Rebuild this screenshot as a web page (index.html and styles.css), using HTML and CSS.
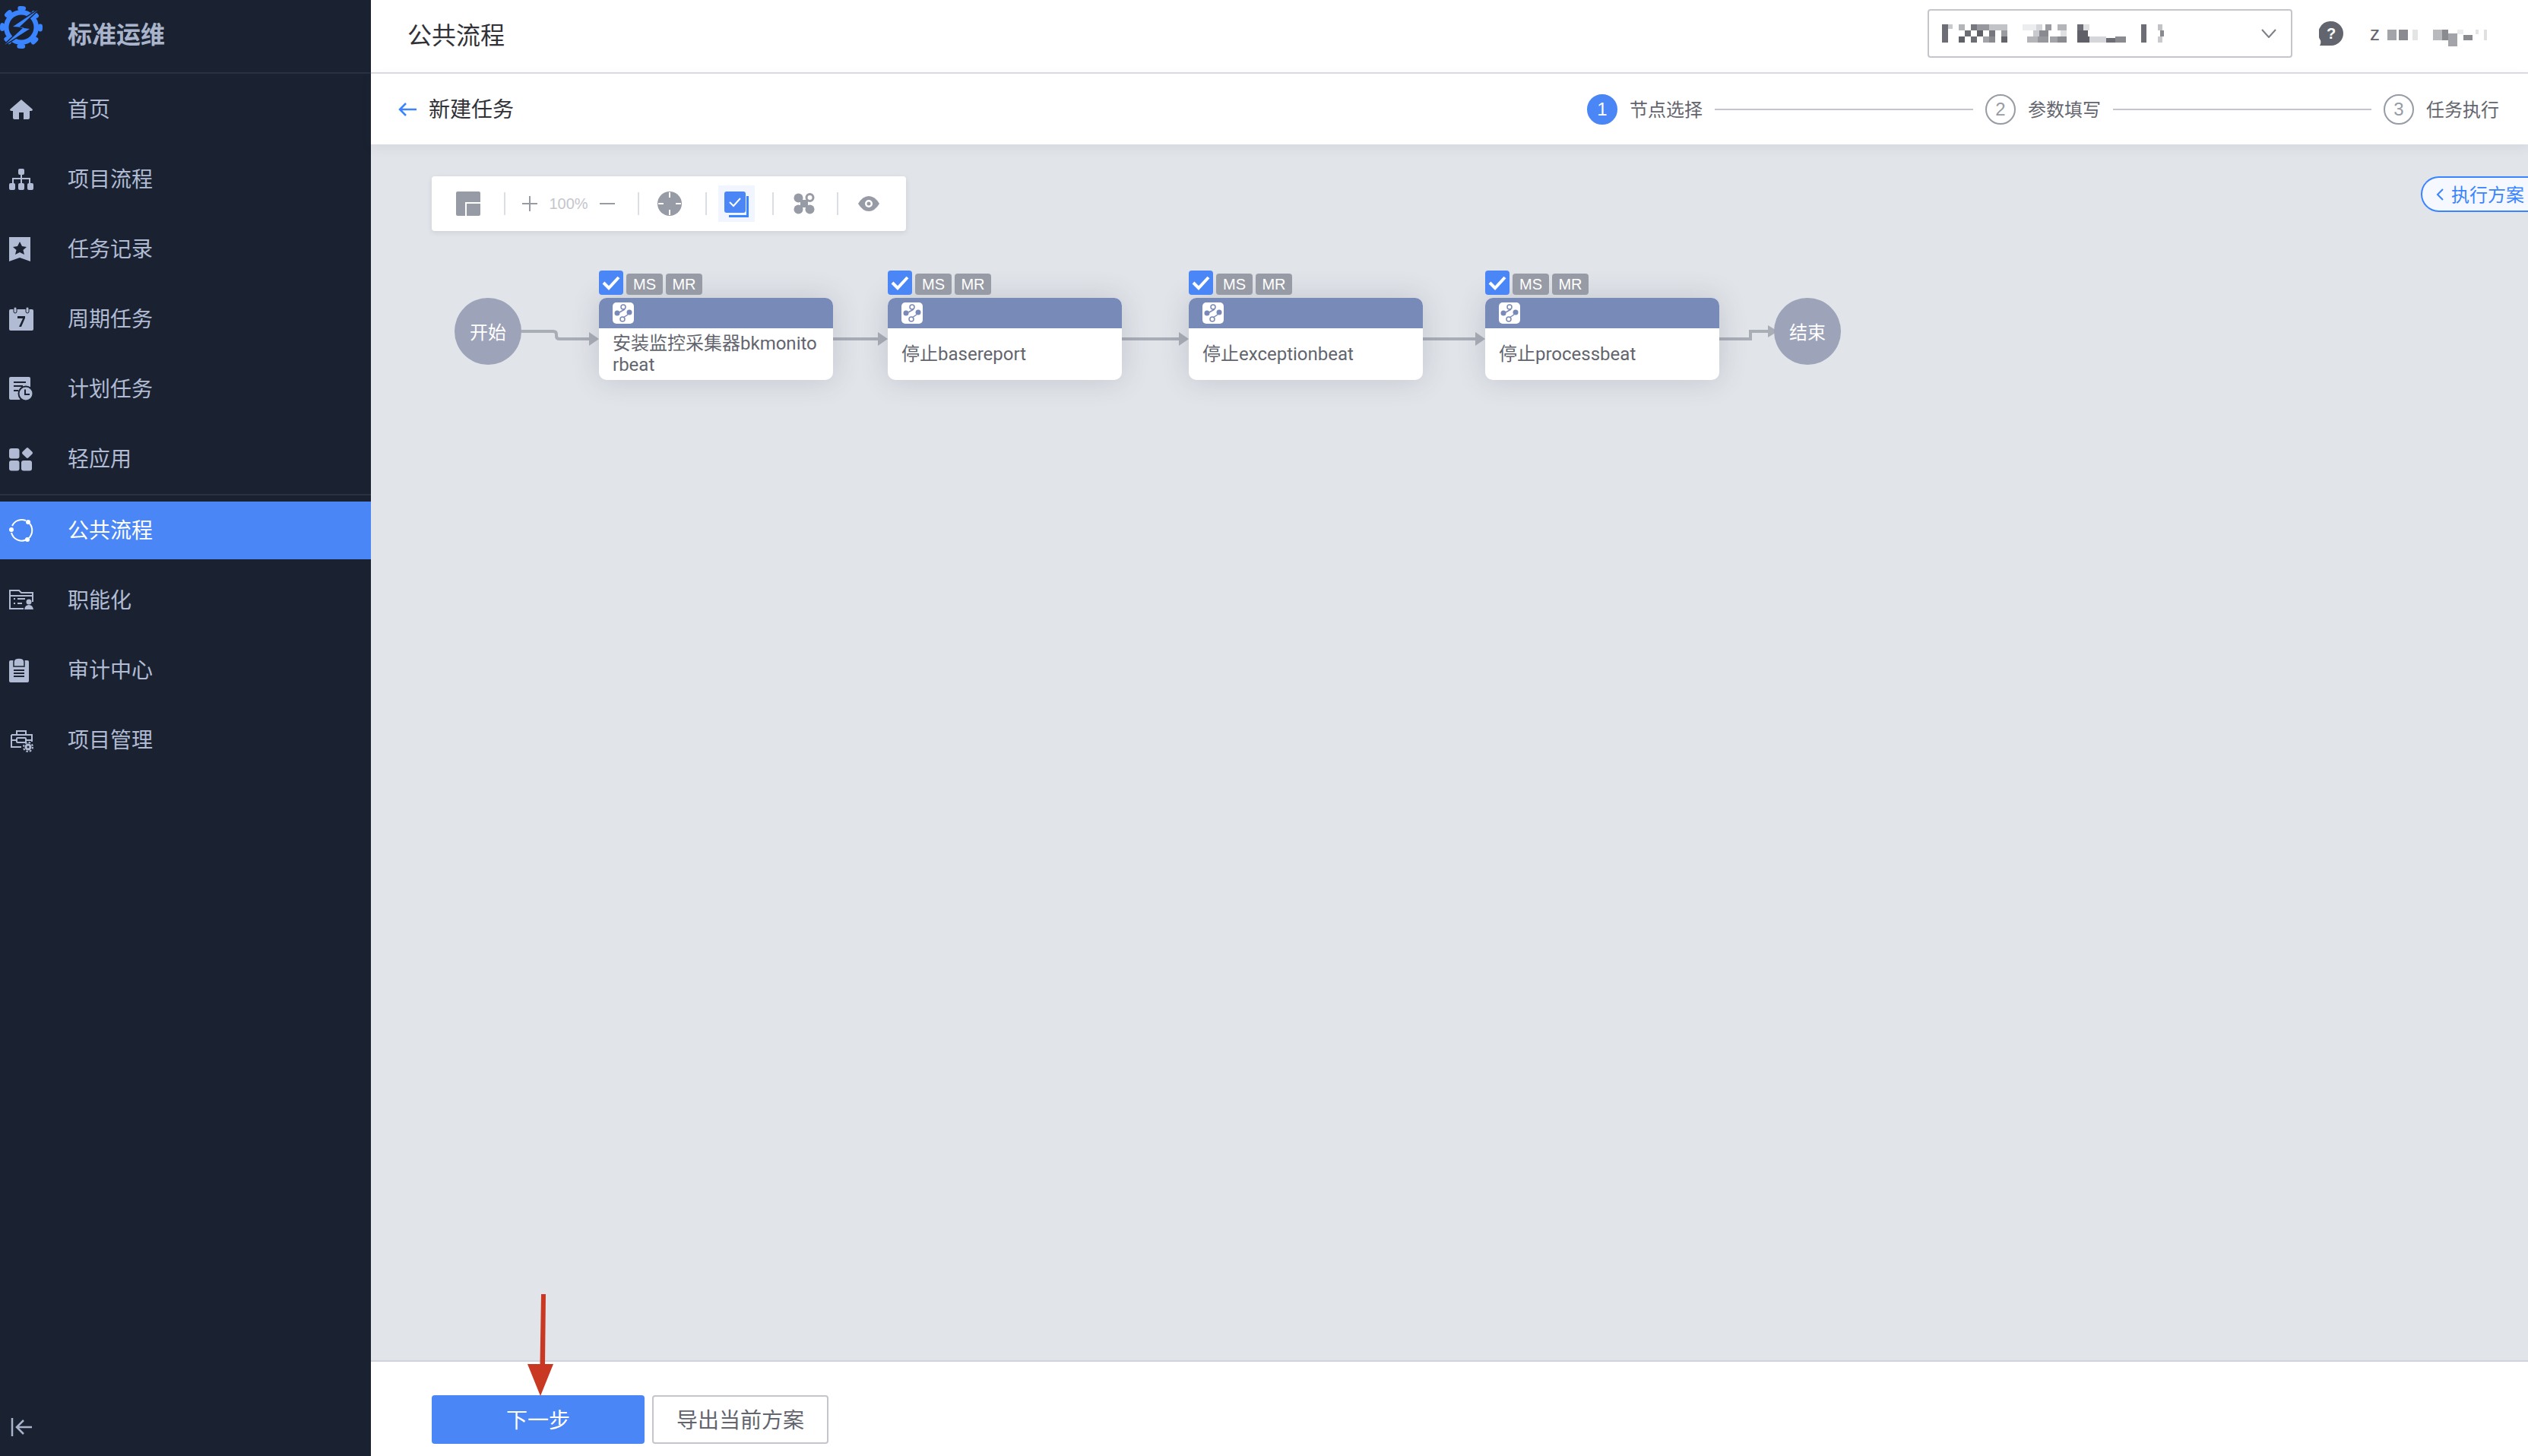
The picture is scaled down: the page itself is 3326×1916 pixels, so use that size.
FILE: index.html
```html
<!DOCTYPE html>
<html lang="zh-CN">
<head>
<meta charset="utf-8">
<title>公共流程</title>
<link rel="stylesheet" href="styles.css">
</head>
<body>
<div class="app">
  <aside class="sidebar">
    <div class="brand">
      <svg class="logo" viewBox="0 0 56 72" width="56" height="72">
        <circle cx="28" cy="36" r="23" fill="#3a84ff"/>
        <circle cx="28" cy="36" r="25" fill="none" stroke="#3a84ff" stroke-width="6" stroke-linecap="round" stroke-dasharray="5 14.630" stroke-dashoffset="2.500"/>
        <circle cx="28" cy="36" r="16.500" fill="#1a2231"/>
        <path d="M50 13 L17 35 L31 36 L6 59 L39 38 L25 36 Z" fill="#3a84ff" stroke="#1a2231" stroke-width="3" stroke-linejoin="round"/>
        <path d="M50 13 L17 35 L31 36 L6 59 L39 38 L25 36 Z" fill="#3a84ff"/>
      </svg>
      <span class="brand-name">标准运维</span>
    </div>
    <nav class="nav">
      <a class="nav-item">
        <svg class="nav-icon" viewBox="0 0 32 32"><path d="M16 3 L31 16 Q31 18 29 18 L27 18 V27 Q27 29 25 29 H7 Q5 29 5 27 V18 L3 18 Q1 18 1 16 Z M13 20 V29 H19 V20 Z" fill="#b1bcd4" fill-rule="evenodd"/></svg>
        <span>首页</span>
      </a>
      <a class="nav-item">
        <svg class="nav-icon" viewBox="0 0 32 32" fill="#b1bcd4"><rect x="12" y="2" width="8" height="8" rx="2"/><rect x="0" y="21" width="8" height="9" rx="2"/><rect x="12" y="21" width="8" height="9" rx="2"/><rect x="24" y="21" width="8" height="9" rx="2"/><path d="M15 10h2v4h11v7h-2v-5H17v5h-2v-5H6v5H4v-7h11z"/></svg>
        <span>项目流程</span>
      </a>
      <a class="nav-item">
        <svg class="nav-icon" viewBox="0 0 32 32"><path d="M0 0 H28 V32 L14 27 L0 32 Z" fill="#b1bcd4"/><path d="M14 6 L17 12 L23 13 L18.500 17 L20 23 L14 20 L8 23 L9.500 17 L5 13 L11 12 Z" fill="#1a2231"/></svg>
        <span>任务记录</span>
      </a>
      <a class="nav-item">
        <svg class="nav-icon" viewBox="0 0 32 32"><path d="M2 3 H30 Q32 3 32 5 V29 Q32 31 30 31 H2 Q0 31 0 29 V5 Q0 3 2 3 Z" fill="#b1bcd4"/><rect x="6" y="0" width="4" height="8" rx="2" fill="#b1bcd4" stroke="#1a2231"/><rect x="22" y="0" width="4" height="8" rx="2" fill="#b1bcd4" stroke="#1a2231"/><path d="M11 12 H21 V14.500 L16 26 H13 L18 15 H11 Z" fill="#1a2231"/></svg>
        <span>周期任务</span>
      </a>
      <a class="nav-item">
        <svg class="nav-icon" viewBox="0 0 32 32"><path d="M2 0 H26 Q28 0 28 2 V14 L14 30 H2 Q0 30 0 28 V2 Q0 0 2 0 Z" fill="#b1bcd4"/><path d="M6 7 H22 M6 12 H18 M6 18 H12" stroke="#1a2231" stroke-width="2"/><circle cx="22" cy="22" r="9.500" fill="#b1bcd4" stroke="#1a2231" stroke-width="2"/><path d="M21 16.500 V23 H27" stroke="#1a2231" stroke-width="2" fill="none"/></svg>
        <span>计划任务</span>
      </a>
      <a class="nav-item">
        <svg class="nav-icon" viewBox="0 0 32 32" fill="#b1bcd4"><rect x="0" y="2" width="13.500" height="13.500" rx="3"/><rect x="0" y="18" width="13.500" height="13.500" rx="3"/><rect x="16" y="18" width="14" height="13.500" rx="3"/><rect x="18.500" y="2.500" width="11" height="11" rx="2" transform="rotate(45 24 8)"/></svg>
        <span>轻应用</span>
      </a>
      <div class="nav-divider"></div>
      <a class="nav-item nav-item-active">
        <svg class="nav-icon" viewBox="0 0 32 32" fill="none" stroke="#fff" stroke-width="2"><path d="M4 10 A14 14 0 0 1 22 3"/><path d="M27 7 A14 14 0 0 1 26 26"/><path d="M22 28.500 A14 14 0 0 1 3 19"/><circle cx="25" cy="5" r="3" fill="#fff" stroke="none"/><circle cx="24" cy="28" r="3" fill="#fff" stroke="none"/><circle cx="3" cy="15" r="3" fill="#fff" stroke="none"/></svg>
        <span>公共流程</span>
      </a>
      <a class="nav-item">
        <svg class="nav-icon" viewBox="0 0 32 32" fill="none" stroke="#b1bcd4" stroke-width="2"><path d="M19 27 H1 V3 H13 L16 6 H31 V18"/><path d="M1 10 H31"/><path d="M6 14 H8 M6 20 H8 M11 14 H21 M11 20 H17"/><circle cx="26" cy="18" r="3.500" fill="#b1bcd4" stroke="none"/><path d="M20 28 Q21 22 26 22 Q31 22 32 28 Z" fill="#b1bcd4" stroke="none"/></svg>
        <span>职能化</span>
      </a>
      <a class="nav-item">
        <svg class="nav-icon nav-icon-narrow" viewBox="0 0 26 32"><path d="M2 3 H24 Q26 3 26 5 V30 Q26 32 24 32 H2 Q0 32 0 30 V5 Q0 3 2 3 Z" fill="#b1bcd4"/><path d="M6 11 V5 Q6 0 13 0 Q20 0 20 5 V11 Z" fill="#b1bcd4" stroke="#1a2231" stroke-width="1.500"/><path d="M6 16 H20 M6 20 H20 M6 24 H20" stroke="#1a2231" stroke-width="2"/></svg>
        <span>审计中心</span>
      </a>
      <a class="nav-item">
        <svg class="nav-icon" viewBox="0 0 32 32" fill="none" stroke="#b1bcd4" stroke-width="2"><path d="M3 9 H30 V18 M3 9 V25 H16 M10 9 V4 H22 V9 M3 16 H10 M22 16 H30"/><rect x="10" y="13" width="12" height="6" rx="1"/><circle cx="25" cy="25" r="3" stroke-width="3"/><circle cx="25" cy="25" r="6" stroke-width="2" stroke-dasharray="2.500 2.200"/></svg>
        <span>项目管理</span>
      </a>
    </nav>
    <div class="collapse">
      <svg viewBox="0 0 28 28" width="28" height="28" fill="none" stroke="#a9b4cb" stroke-width="2.500"><path d="M2 2 V26"/><path d="M28 14 H9 M17 5 L8 14 L17 23"/></svg>
    </div>
  </aside>

  <main class="main">
    <header class="topbar">
      <h1 class="page-title">公共流程</h1>
      <div class="topbar-right">
        <div class="select">
          <svg class="mosaic" viewBox="0 0 300 26" width="300" height="26" shape-rendering="crispEdges">
            <rect x="0" y="1" width="8" height="24" fill="#6d6e75"/><rect x="8" y="1" width="6" height="6" fill="#c9cacd"/>
            <rect x="22" y="1" width="8" height="8" fill="#b4b5b9"/><rect x="38" y="1" width="8" height="8" fill="#77787f"/><rect x="46" y="1" width="16" height="8" fill="#97989e"/><rect x="62" y="1" width="24" height="8" fill="#c2c3c7"/>
            <rect x="30" y="9" width="8" height="8" fill="#6d6e75"/><rect x="46" y="9" width="8" height="8" fill="#5f6068"/><rect x="62" y="9" width="8" height="8" fill="#77787f"/><rect x="78" y="9" width="8" height="8" fill="#9b9ca2"/>
            <rect x="22" y="17" width="8" height="8" fill="#5f6068"/><rect x="38" y="17" width="8" height="8" fill="#6d6e75"/><rect x="54" y="17" width="8" height="8" fill="#a3a4a9"/><rect x="62" y="17" width="8" height="8" fill="#8a8b91"/><rect x="78" y="17" width="8" height="8" fill="#63646b"/>
            <rect x="106" y="1" width="18" height="8" fill="#ecedef"/><rect x="124" y="1" width="8" height="8" fill="#d5d6d9"/><rect x="136" y="1" width="8" height="8" fill="#9b9ca2"/><rect x="152" y="1" width="12" height="8" fill="#b4b5b9"/><rect x="178" y="1" width="8" height="8" fill="#6d6e75"/><rect x="186" y="1" width="8" height="8" fill="#dfe0e2"/>
            <rect x="120" y="9" width="16" height="8" fill="#c9cacd"/><rect x="128" y="9" width="12" height="8" fill="#8a8b91"/><rect x="156" y="9" width="8" height="8" fill="#dfe0e2"/><rect x="178" y="9" width="14" height="8" fill="#5f6068"/>
            <rect x="112" y="17" width="14" height="8" fill="#b4b5b9"/><rect x="126" y="17" width="14" height="8" fill="#97989e"/><rect x="142" y="17" width="10" height="8" fill="#a3a4a9"/><rect x="152" y="17" width="12" height="8" fill="#8a8b91"/><rect x="178" y="17" width="16" height="8" fill="#5f6068"/><rect x="194" y="17" width="22" height="8" fill="#d5d6d9"/><rect x="216" y="19" width="12" height="6" fill="#6d6e75"/><rect x="228" y="17" width="14" height="8" fill="#8a8b91"/>
            <rect x="262" y="1" width="7" height="24" fill="#6d6e75"/><rect x="284" y="1" width="6" height="8" fill="#c2c3c7"/><rect x="287" y="9" width="5" height="8" fill="#8a8b91"/><rect x="284" y="17" width="6" height="8" fill="#c9cacd"/>
          </svg>
          <svg class="chevron" viewBox="0 0 20 12" width="20" height="12" fill="none" stroke="#7d7f87" stroke-width="2"><path d="M1 1 L10 11 L19 1"/></svg>
        </div>
        <svg class="help" viewBox="0 0 32 32" width="32" height="32"><path d="M16 0 A16 16 0 1 1 16 32 L1 32 Q3 29 2 25 A16 16 0 0 1 16 0 Z" fill="#63656e"/><text x="16" y="23" text-anchor="middle" class="help-mark">?</text></svg>
        <div class="user">
          <span class="user-initial">z</span>
          <svg viewBox="0 0 150 24" width="150" height="24" shape-rendering="crispEdges">
            <rect x="0" y="0" width="13" height="15" fill="#a3a4a9"/><rect x="16" y="0" width="13" height="15" fill="#8a8b91"/><rect x="35" y="0" width="7" height="15" fill="#e3e4e6"/>
            <rect x="63" y="0" width="13" height="15" fill="#b9babe"/><rect x="76" y="0" width="8" height="15" fill="#8a8b91"/><rect x="84" y="6" width="13" height="18" fill="#a3a4a9"/><rect x="97" y="0" width="8" height="7" fill="#eaebed"/><rect x="105" y="8" width="13" height="7" fill="#8a8b91"/><rect x="122" y="0" width="5" height="7" fill="#e3e4e6"/><rect x="134" y="0" width="4" height="15" fill="#dfe0e2"/>
          </svg>
        </div>
      </div>
    </header>

    <section class="subbar">
      <div class="back">
        <svg viewBox="0 0 24 20" width="24" height="20" fill="none" stroke="#3a84ff" stroke-width="2.500"><path d="M24 10 H2 M10 2 L2 10 L10 18"/></svg>
        <span>新建任务</span>
      </div>
      <ol class="steps">
        <li class="step step-current"><span class="step-num">1</span><span class="step-label">节点选择</span></li>
        <li class="step-line"></li>
        <li class="step"><span class="step-num">2</span><span class="step-label">参数填写</span></li>
        <li class="step-line"></li>
        <li class="step"><span class="step-num">3</span><span class="step-label">任务执行</span></li>
      </ol>
    </section>

    <section class="canvas">
      <div class="toolbar">
        <svg class="tool" viewBox="0 0 32 32" width="32" height="32"><rect width="32" height="32" rx="2" fill="#979ba5"/><path d="M13 32 V15 H32" fill="none" stroke="#fff" stroke-width="2"/></svg>
        <i class="tool-sep"></i>
        <div class="zoom-group">
          <svg viewBox="0 0 20 20" width="20" height="20" stroke="#979ba5" stroke-width="2"><path d="M0 10 H20 M10 0 V20"/></svg>
          <span class="zoom-value">100%</span>
          <svg viewBox="0 0 20 20" width="20" height="20" stroke="#979ba5" stroke-width="2"><path d="M0 10 H20"/></svg>
        </div>
        <i class="tool-sep"></i>
        <svg class="tool" viewBox="0 0 32 32" width="32" height="32"><circle cx="16" cy="16" r="16" fill="#979ba5"/><path d="M16 1 V8 M16 24 V31 M1 16 H8 M24 16 H31" stroke="#fff" stroke-width="2"/></svg>
        <i class="tool-sep"></i>
        <div class="tool-active">
          <svg viewBox="0 0 32 34" width="32" height="34"><path d="M30.500 6 V32.500 H6" fill="none" stroke="#3a84ff" stroke-width="3"/><rect x="0" y="0" width="28" height="28" rx="3" fill="#4a86f6"/><path d="M7 14 L12 19 L21 9" fill="none" stroke="#fff" stroke-width="2"/></svg>
        </div>
        <i class="tool-sep"></i>
        <svg class="tool tool-fork" viewBox="0 0 28 28" width="28" height="28" fill="#979ba5"><circle cx="6.500" cy="6.500" r="6"/><circle cx="21.500" cy="6" r="4.500" fill="none" stroke="#979ba5" stroke-width="3"/><circle cx="6.500" cy="21.500" r="6"/><circle cx="21.500" cy="21.500" r="6"/><rect x="9" y="9" width="10" height="10"/></svg>
        <i class="tool-sep"></i>
        <svg class="tool tool-eye" viewBox="0 0 28 20" width="28" height="20"><path d="M0 10 Q6 0 14 0 Q22 0 28 10 Q22 20 14 20 Q6 20 0 10 Z" fill="#979ba5"/><circle cx="14" cy="10" r="5" fill="#fff"/><circle cx="14" cy="10" r="2.500" fill="#979ba5"/></svg>
      </div>

      <button class="plan-btn"><svg viewBox="0 0 10 16" width="10" height="16" fill="none" stroke="#3a84ff" stroke-width="2"><path d="M9 1 L2 8 L9 15"/></svg><span>执行方案</span></button>

      <svg class="edges" viewBox="0 0 2838 400" width="2838" height="400" fill="none" stroke="#a9adb6" stroke-width="4">
        <path d="M198 246 H240 Q244 246 244 250 V252 Q244 256 248 256 H288"/>
        <path d="M608 256 H668"/>
        <path d="M988 256 H1064"/>
        <path d="M1384 256 H1454"/>
        <path d="M1774 256 H1815 V246 H1840"/>
        <path d="M287 247 L300 256 L287 265 Z" fill="#a9adb6" stroke="none"/>
        <path d="M667 247 L680 256 L667 265 Z" fill="#a9adb6" stroke="none"/>
        <path d="M1063 247 L1076 256 L1063 265 Z" fill="#a9adb6" stroke="none"/>
        <path d="M1453 247 L1466 256 L1453 265 Z" fill="#a9adb6" stroke="none"/>
        <path d="M1838 238 L1851 246 L1838 254 Z" fill="#a9adb6" stroke="none"/>
      </svg>

      <div class="terminal terminal-start">开始</div>

      <div class="node node-a">
        <div class="node-tags"><span class="check"><svg viewBox="0 0 32 32" width="32" height="32" fill="none" stroke="#fff" stroke-width="4"><path d="M6 16 L13 23 L26 9"/></svg></span><span class="tag">MS</span><span class="tag">MR</span></div>
        <div class="node-head"><svg class="node-icon" viewBox="0 0 28 28" width="28" height="28"><rect width="28" height="28" rx="5" fill="#fff"/><g fill="none" stroke="#7a8ab8" stroke-width="1.500"><path d="M16 9 L9 13 M20 16 L14 20"/><circle cx="14" cy="6" r="3"/><circle cx="13" cy="22" r="3"/></g><circle cx="6" cy="14" r="3.500" fill="#7a8ab8"/><circle cx="22" cy="13" r="3.500" fill="#7a8ab8"/></svg></div>
        <div class="node-body">安装监控采集器bkmonitorbeat</div>
      </div>

      <div class="node node-b">
        <div class="node-tags"><span class="check"><svg viewBox="0 0 32 32" width="32" height="32" fill="none" stroke="#fff" stroke-width="4"><path d="M6 16 L13 23 L26 9"/></svg></span><span class="tag">MS</span><span class="tag">MR</span></div>
        <div class="node-head"><svg class="node-icon" viewBox="0 0 28 28" width="28" height="28"><rect width="28" height="28" rx="5" fill="#fff"/><g fill="none" stroke="#7a8ab8" stroke-width="1.500"><path d="M16 9 L9 13 M20 16 L14 20"/><circle cx="14" cy="6" r="3"/><circle cx="13" cy="22" r="3"/></g><circle cx="6" cy="14" r="3.500" fill="#7a8ab8"/><circle cx="22" cy="13" r="3.500" fill="#7a8ab8"/></svg></div>
        <div class="node-body">停止basereport</div>
      </div>

      <div class="node node-c">
        <div class="node-tags"><span class="check"><svg viewBox="0 0 32 32" width="32" height="32" fill="none" stroke="#fff" stroke-width="4"><path d="M6 16 L13 23 L26 9"/></svg></span><span class="tag">MS</span><span class="tag">MR</span></div>
        <div class="node-head"><svg class="node-icon" viewBox="0 0 28 28" width="28" height="28"><rect width="28" height="28" rx="5" fill="#fff"/><g fill="none" stroke="#7a8ab8" stroke-width="1.500"><path d="M16 9 L9 13 M20 16 L14 20"/><circle cx="14" cy="6" r="3"/><circle cx="13" cy="22" r="3"/></g><circle cx="6" cy="14" r="3.500" fill="#7a8ab8"/><circle cx="22" cy="13" r="3.500" fill="#7a8ab8"/></svg></div>
        <div class="node-body">停止exceptionbeat</div>
      </div>

      <div class="node node-d">
        <div class="node-tags"><span class="check"><svg viewBox="0 0 32 32" width="32" height="32" fill="none" stroke="#fff" stroke-width="4"><path d="M6 16 L13 23 L26 9"/></svg></span><span class="tag">MS</span><span class="tag">MR</span></div>
        <div class="node-head"><svg class="node-icon" viewBox="0 0 28 28" width="28" height="28"><rect width="28" height="28" rx="5" fill="#fff"/><g fill="none" stroke="#7a8ab8" stroke-width="1.500"><path d="M16 9 L9 13 M20 16 L14 20"/><circle cx="14" cy="6" r="3"/><circle cx="13" cy="22" r="3"/></g><circle cx="6" cy="14" r="3.500" fill="#7a8ab8"/><circle cx="22" cy="13" r="3.500" fill="#7a8ab8"/></svg></div>
        <div class="node-body">停止processbeat</div>
      </div>

      <div class="terminal terminal-end">结束</div>
    </section>

    <footer class="footer">
      <button class="btn btn-primary">下一步</button>
      <button class="btn btn-default">导出当前方案</button>
    </footer>

    <svg class="red-arrow" viewBox="0 0 40 134" width="40" height="134"><path d="M21 0 H27 L26 92 H37 L20 134 L3 92 H19.500 Z" fill="#c93823"/></svg>
  </main>
</div>
</body>
</html>
```

FILE: styles.css
```css
* { box-sizing: border-box; }
html, body { margin: 0; height: 100%; overflow: hidden; }
body {
  font-family: "Liberation Sans", "Noto Sans CJK SC", sans-serif;
  color: #63656e;
  background: #fff;
}
.app { display: flex; height: 100vh; }

/* sidebar */
.sidebar {
  width: 488px;
  flex: none;
  background: #1a2231;
  display: flex;
  flex-direction: column;
  color: #b1bcd4;
}
.brand {
  height: 97px;
  flex: none;
  display: flex;
  align-items: center;
  border-bottom: 2px solid #2a3142;
}
.logo { flex: none; margin-bottom: 24px; }
.brand-name { margin-left: 33px; font-size: 32px; font-weight: 700; color: #a9b4cb; padding-bottom: 9px; }
.nav { display: flex; flex-direction: column; padding-top: 9px; }
.nav-item {
  height: 76px;
  margin-bottom: 16px;
  display: flex;
  align-items: center;
  font-size: 28px;
  padding-left: 12px;
  color: #b1bcd4;
}
.nav-item span { padding-bottom: 4px; }
.nav-item:nth-child(6) { margin-bottom: 0; }
.nav-icon { width: 32px; height: 32px; flex: none; margin-right: 45px; }
.nav-icon-narrow { width: 26px; margin-right: 51px; }
.nav-divider { height: 2px; margin: 8px 0; background: #2a3142; }
.nav-item-active { background: #4a86f6; color: #fff; }
.collapse { margin-top: auto; padding: 0 0 24px 14px; line-height: 0; }

/* main column */
.main { flex: 1; min-width: 0; display: flex; flex-direction: column; position: relative; }
.topbar {
  height: 97px;
  flex: none;
  display: flex;
  align-items: center;
  justify-content: space-between;
  border-bottom: 2px solid #dcdee5;
  padding: 0 43px 7px 48px;
}
.page-title { margin: 0; font-size: 32px; font-weight: 400; color: #313238; }
.topbar-right { display: flex; align-items: center; }
.select {
  width: 480px;
  height: 64px;
  border: 2px solid #c4c6cc;
  border-radius: 4px;
  display: flex;
  align-items: center;
  justify-content: space-between;
  padding: 0 19px 0 17px;
  margin-right: 35px;
}
.help { flex: none; margin-right: 36px; }
.help-mark { font-size: 20px; font-weight: 700; fill: #fff; font-family: "Liberation Sans", sans-serif; }
.user { display: flex; align-items: center; width: 164px; font-size: 26px; color: #63656e; }
.user-initial { width: 24px; margin-left: -1px; }
.user svg { margin-top: 12px; }

.subbar {
  height: 93px;
  flex: none;
  display: flex;
  align-items: center;
  justify-content: space-between;
  padding: 0 38px 0 36px;
  background: #fff;
  box-shadow: 0 4px 14px rgba(60, 70, 90, .08);
  position: relative;
  z-index: 2;
}
.back { display: flex; align-items: center; gap: 16px; font-size: 28px; color: #313238; }
.back span { padding-bottom: 3px; }
.steps { list-style: none; margin: 0; padding: 0; display: flex; align-items: center; gap: 16px; font-size: 24px; }
.step { display: flex; align-items: center; gap: 16px; color: #63656e; }
.step-label { padding-bottom: 3px; }
.step-num {
  width: 40px;
  height: 40px;
  border-radius: 50%;
  border: 2px solid #979ba5;
  color: #979ba5;
  display: flex;
  align-items: center;
  justify-content: center;
  font-size: 24px;
}
.step-current .step-num { background: #4a86f6; border-color: #4a86f6; color: #fff; }
.step-line { width: 340px; height: 2px; background: #c4c6cc; }

/* canvas */
.canvas { flex: 1; min-height: 0; position: relative; background: #e1e4e9; overflow: hidden; }
.toolbar {
  position: absolute;
  left: 80px;
  top: 42px;
  width: 624px;
  height: 72px;
  background: #fff;
  border-radius: 4px;
  box-shadow: 0 2px 6px rgba(60, 70, 90, .12);
  display: flex;
  align-items: center;
  padding-left: 32px;
}
.tool { flex: none; }
.tool-sep { width: 2px; height: 30px; background: #dcdee5; margin: 0 24px 0 31px; flex: none; }
.zoom-group { display: flex; align-items: center; width: 122px; justify-content: space-between; flex: none; margin: 0 -1px 0 -2px; }
.zoom-value { font-size: 20px; color: #c4c6cc; }
.tool-active { width: 48px; height: 48px; background: #f0f5ff; margin: 0 -8px 0 -9px; padding: 8px; flex: none; display: flex; }
.tool-fork { margin-left: 2px; margin-right: -2px; }
.tool-eye { margin-left: 2px; }
.plan-btn {
  position: absolute;
  right: 0;
  top: 42px;
  width: 141px;
  height: 47px;
  border: 2px solid #3a84ff;
  border-right: 0;
  border-radius: 24px 0 0 24px;
  background: #f5f8ff;
  color: #3a84ff;
  font: 24px "Liberation Sans", "Noto Sans CJK SC", sans-serif;
  display: flex;
  align-items: center;
  gap: 10px;
  padding: 0 0 0 18px;
  white-space: nowrap;
}
.plan-btn span { padding-bottom: 3px; }
.edges { position: absolute; left: 0; top: 0; }
.terminal {
  position: absolute;
  top: 202px;
  width: 88px;
  height: 88px;
  border-radius: 50%;
  background: #9da3b8;
  color: #fff;
  font-size: 24px;
  display: flex;
  align-items: center;
  justify-content: center;
  padding-bottom: 2px;
}
.terminal-start { left: 110px; }
.terminal-end { left: 1846px; }
.node {
  position: absolute;
  top: 202px;
  width: 308px;
  height: 108px;
  background: #fff;
  border-radius: 10px;
  box-shadow: 0 0 36px rgba(70, 80, 100, .2);
}
.node-a { left: 300px; }
.node-b { left: 680px; }
.node-c { left: 1076px; }
.node-d { left: 1466px; }
.node-tags { position: absolute; left: 0; top: -36px; display: flex; align-items: flex-end; gap: 4px; }
.check { width: 32px; height: 32px; background: #4a86f6; border-radius: 4px; display: block; line-height: 0; }
.tag {
  height: 28px;
  padding: 0 7px;
  min-width: 48px;
  background: #979ba5;
  border-radius: 4px;
  color: #fff;
  font-size: 20px;
  display: flex;
  align-items: center;
  justify-content: center;
}
.node-head { height: 40px; background: #788ab8; border-radius: 10px 10px 0 0; padding: 6px 0 0 18px; }
.node-icon { display: block; }
.node-body {
  height: 68px;
  padding: 0 18px;
  font-family: Roboto, "Noto Sans CJK SC", sans-serif;
  font-size: 24px;
  line-height: 28px;
  color: #63656e;
  word-break: break-all;
  display: flex;
  align-items: center;
}

/* footer */
.footer {
  height: 126px;
  flex: none;
  background: #fff;
  border-top: 2px solid #d0d3dc;
  display: flex;
  gap: 10px;
  padding: 44px 0 0 80px;
}
.btn { height: 64px; font: 28px "Liberation Sans", "Noto Sans CJK SC", sans-serif; border-radius: 4px; padding-bottom: 4px; }
.btn-primary { width: 280px; background: #4a86f6; border: 0; color: #fff; }
.btn-default { width: 232px; background: #fff; border: 2px solid #c4c6cc; color: #63656e; }
.red-arrow { position: absolute; left: 203px; bottom: 79px; }
```
